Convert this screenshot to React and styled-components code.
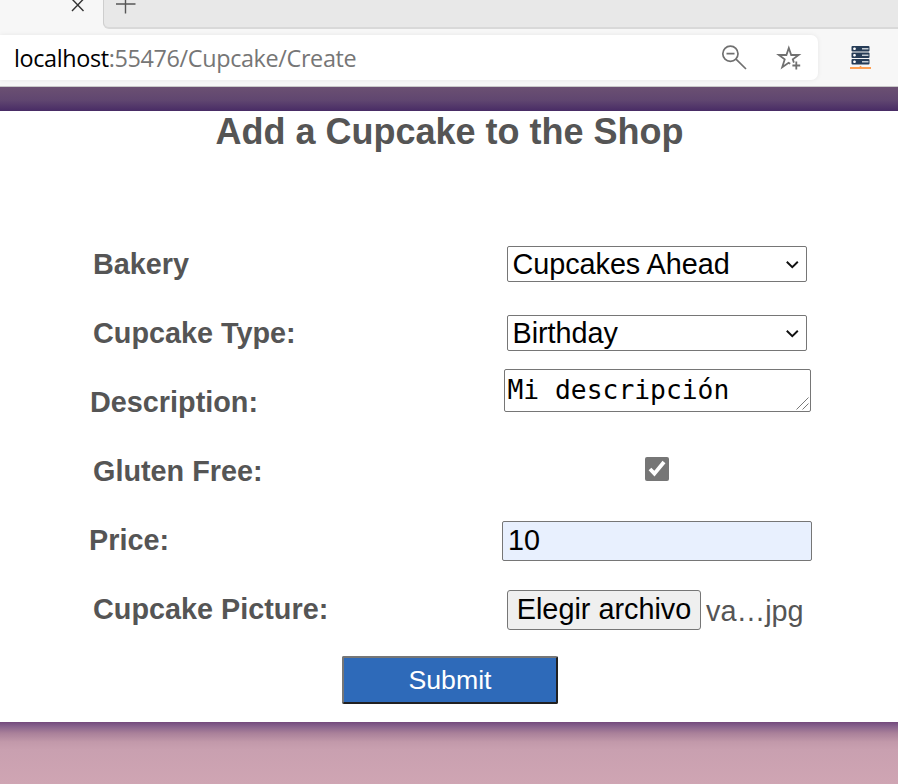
import React from "react";
import styled, { createGlobalStyle } from "styled-components";

const GlobalStyle = createGlobalStyle`
  * { box-sizing: border-box; }
  body { margin: 0; overflow: hidden; background: #cfa5b3; }
  button, input, select, textarea { margin: 0; }
`;

const Window = styled.div`
  display: flex;
  flex-direction: column;
  width: 898px;
  height: 784px;
  font-family: "Liberation Sans", Arial, sans-serif;
  color: #555;
`;

const TabStrip = styled.header`
  display: flex;
  height: 29px;
  background: #f7f7f7;
`;

const ActiveTab = styled.div`
  flex: 0 0 103px;
  padding-left: 71px;
`;

const TabTail = styled.div`
  flex: 1;
  padding-left: 12px;
  background: #e8e8e8;
  border-left: 1px solid #cecece;
  border-bottom: 2px solid #d9d9d9;
  border-bottom-left-radius: 6px;
`;

const Icon = styled.svg`
  display: block;
  flex: none;
  overflow: visible;
`;

const Toolbar = styled.div`
  display: flex;
  align-items: center;
  gap: 32px;
  height: 58px;
  background: #f7f7f7;
  border-bottom: 1px solid #c9c9c9;
`;

const AddressBar = styled.div`
  display: flex;
  align-items: center;
  width: 818px;
  height: 45px;
  padding: 0 17px 0 14px;
  background: #fff;
  border-radius: 0 7px 7px 0;
  box-shadow: 0 0 5px rgba(0, 0, 0, 0.07);
`;

const Url = styled.div`
  flex: 1;
  padding-top: 2px;
  font: 23.4px/45px "Open Sans", "Noto Sans", sans-serif;
  letter-spacing: -0.36px;
  white-space: nowrap;
  color: #767676;
`;

const Host = styled.span`
  color: #000;
`;

const AddressActions = styled.div`
  display: flex;
  gap: 30px;
`;

const HeaderBand = styled.div`
  height: 24px;
  background: linear-gradient(#6b5072 0%, #604670 55%, #482b65 100%);
`;

const Panel = styled.main`
  height: 611px;
  background: #fff;
`;

const Title = styled.h1`
  margin: 0;
  padding-left: 1px;
  font-size: 36px;
  line-height: 41px;
  text-align: center;
`;

const Form = styled.form`
  display: flex;
  flex-direction: column;
  padding-top: 77px;
`;

const Row = styled.div`
  display: grid;
  grid-template-columns: 409px 310px;
  align-items: center;
  height: 69px;
  padding-left: 93px;
`;

const Label = styled.label`
  font-size: 28.8px;
  line-height: 34px;
  font-weight: bold;
  margin-left: ${({ $shift }) => $shift || 0}px;
`;

const Control = styled.div`
  position: relative;
  justify-self: center;
  display: flex;
  align-items: center;
  margin-top: ${({ $lift }) => -($lift || 0)}px;
`;

const Select = styled.select`
  appearance: none;
  width: 300px;
  height: 36px;
  padding: 0 4.5px;
  font: 28.8px "Liberation Sans", Arial, sans-serif;
  letter-spacing: -0.04px;
  color: #000;
  background: #fff;
  border: 1px solid #767676;
  border-radius: 2px;
`;

const Chevron = styled(Icon)`
  position: absolute;
  right: 8px;
  top: 15px;
  pointer-events: none;
`;

const Description = styled.textarea`
  display: block;
  width: 307px;
  height: 43px;
  padding: 3px 2px 3px 3px;
  font: 26.32px/34px "DejaVu Sans Mono", monospace;
  color: #000;
  border: 1px solid #767676;
  border-radius: 2px;
  resize: none;
  overflow: hidden;
`;

const ResizeGrip = styled(Icon)`
  position: absolute;
  right: 2px;
  bottom: 2px;
  pointer-events: none;
`;

const CheckBox = styled.span`
  display: flex;
  width: 24px;
  height: 24px;
  background: #767676;
  border-radius: 2px;
`;

const PriceInput = styled.input`
  width: 310px;
  height: 40px;
  padding: 0 5px;
  font: 28.8px "Liberation Sans", Arial, sans-serif;
  color: #000;
  background: #e8f0fe;
  border: 1px solid #767676;
  border-radius: 2px;
`;

const FilePicker = styled(Control)`
  width: 300px;
  gap: 5px;
`;

const FileButton = styled.button`
  width: 194px;
  height: 40px;
  padding: 0;
  font: 28.8px "Liberation Sans", Arial, sans-serif;
  white-space: nowrap;
  color: #000;
  background: #efefef;
  border: 1px solid #767676;
  border-radius: 3px;
`;

const FileName = styled.span`
  font-size: 28.8px;
  line-height: 40px;
  padding-top: 2px;
`;

const SubmitButton = styled.button`
  align-self: center;
  width: 216px;
  height: 48px;
  margin: 13px 0 0 2px;
  padding: 0;
  font: 26.67px "Liberation Sans", Arial, sans-serif;
  color: #fff;
  background: #2e6ab9;
  border: 2px solid;
  border-color: #767676 #212121 #212121 #767676;
  border-radius: 2px;
`;

const Footer = styled.footer`
  flex: 1;
  background: linear-gradient(#73497c 0, #86608b 4px, #a98099 11px, #c299aa 20px, #c9a0b0 28px, #cfa5b3 62px);
`;

function SelectField({ id, value }) {
  return (
    <Control>
      <Select id={id} defaultValue={value}>
        <option>{value}</option>
      </Select>
      <Chevron width="13" height="8" viewBox="0 0 13 8">
        <path d="M.8 .8l5.5 5.3L11.8 .8" fill="none" stroke="#111" strokeWidth="2" />
      </Chevron>
    </Control>
  );
}

function ServerIcon() {
  return (
    <Icon width="21" height="25" viewBox="0 0 21 25">
      {[0, 6.5, 13].map((y) => (
        <g key={y} transform={`translate(1.5 ${y + 1})`}>
          <rect width="18" height="5.5" rx="1" fill="#263c57" />
          <path d="M1.7 2.75h2.6M3 1.4v2.7" stroke="#fff" strokeWidth="1.7" />
          <path d="M10.5 2.75H17" stroke="#c3cbd3" strokeWidth="1.5" />
        </g>
      ))}
      <path d="M0 23h21" stroke="#ffa052" strokeWidth="2" />
      <path d="M9 22.2l1.5-1.5 1.5 1.5z" fill="#ff9138" />
    </Icon>
  );
}

export default function App() {
  return (
    <Window>
      <GlobalStyle />
      <TabStrip>
        <ActiveTab>
          <Icon width="14" height="12" viewBox="0 0 14 12">
            <path d="M1-1l11.5 12M12.5-1L1 11" stroke="#333" strokeWidth="1.4" />
          </Icon>
        </ActiveTab>
        <TabTail>
          <Icon width="20" height="14" viewBox="0 0 20 14">
            <path d="M0 4h19.5M9.5-5v18.5" stroke="#555" strokeWidth="1.4" />
          </Icon>
        </TabTail>
      </TabStrip>
      <Toolbar>
        <AddressBar>
          <Url><Host>localhost</Host>:55476/Cupcake/Create</Url>
          <AddressActions>
            <Icon width="25" height="25" viewBox="0 0 25 25" fill="none" stroke="#707070" strokeWidth="1.7">
              <circle cx="8.4" cy="8.7" r="7.6" />
              <path d="M4.5 8.7h8M14 14.2L24 24" />
            </Icon>
            <Icon width="24" height="25" viewBox="0 0 24 25" fill="none" stroke="#707070" strokeWidth="1.8">
              <path d="M13.2 18.8l-1.6-1-6.4 4.5 2.5-7.9-5.9-4.4h7.6l2.4-7 2.4 7h7.5l-5.9 4.4 1.1 3.2" />
              <path d="M15.4 20.5h7.8M19.3 16.6v7.8" />
            </Icon>
          </AddressActions>
        </AddressBar>
        <ServerIcon />
      </Toolbar>
      <HeaderBand />
      <Panel>
        <Title>Add a Cupcake to the Shop</Title>
        <Form onSubmit={(event) => event.preventDefault()}>
          <Row>
            <Label htmlFor="bakery">Bakery</Label>
            <SelectField id="bakery" value="Cupcakes Ahead" />
          </Row>
          <Row>
            <Label htmlFor="type">Cupcake Type:</Label>
            <SelectField id="type" value="Birthday" />
          </Row>
          <Row>
            <Label htmlFor="description" $shift={-3}>Description:</Label>
            <Control $lift={22}>
              <Description id="description" rows="1" spellCheck="false" defaultValue="Mi descripción" />
              <ResizeGrip width="13" height="13" viewBox="0 0 13 13">
                <path d="M.5 12.5l12-12M6.5 12.5l6-6" stroke="#555" strokeWidth="0.8" />
              </ResizeGrip>
            </Control>
          </Row>
          <Row>
            <Label>Gluten Free:</Label>
            <Control $lift={4}>
              <CheckBox role="checkbox" aria-checked="true" aria-label="Gluten Free" tabIndex={0}>
                <Icon width="24" height="24" viewBox="0 0 24 24">
                  <path d="M5 12l4.4 4.6L19 5" fill="none" stroke="#fff" strokeWidth="3.8" />
                </Icon>
              </CheckBox>
            </Control>
          </Row>
          <Row>
            <Label htmlFor="price" $shift={-4}>Price:</Label>
            <Control $lift={-2}>
              <PriceInput id="price" defaultValue="10" />
            </Control>
          </Row>
          <Row>
            <Label>Cupcake Picture:</Label>
            <FilePicker $lift={-2}>
              <FileButton type="button">Elegir archivo</FileButton>
              <FileName>va…jpg</FileName>
            </FilePicker>
          </Row>
          <SubmitButton type="submit">Submit</SubmitButton>
        </Form>
      </Panel>
      <Footer />
    </Window>
  );
}
